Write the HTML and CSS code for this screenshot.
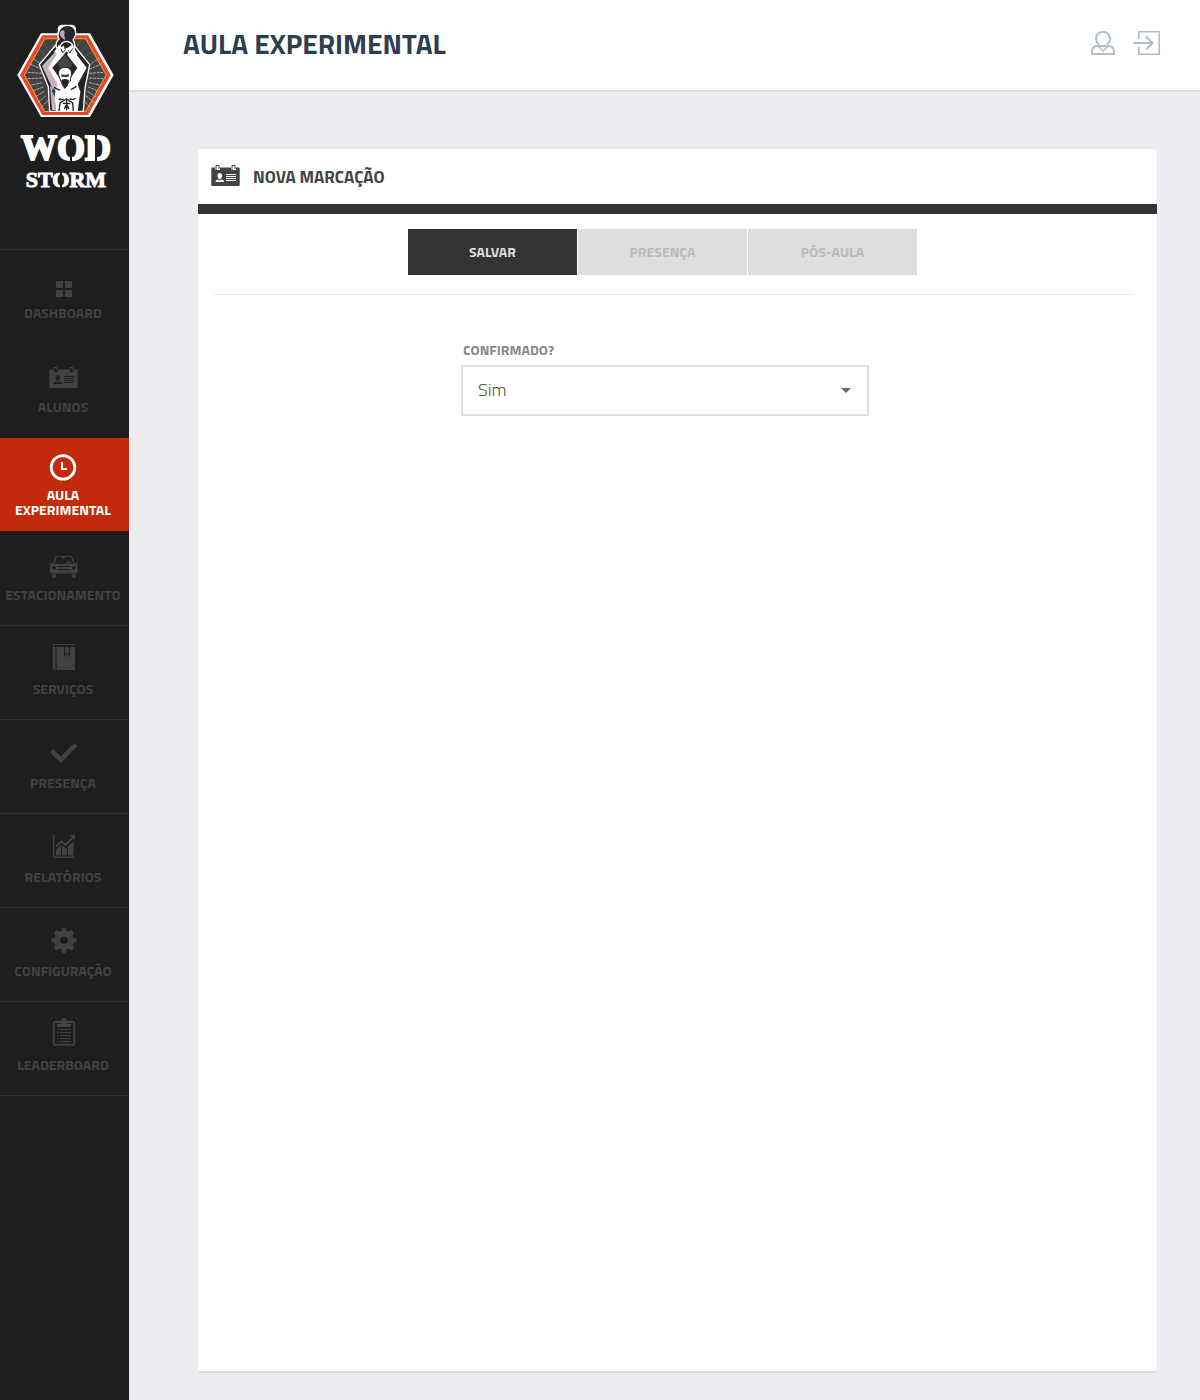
FILE: index.html
```html
<!DOCTYPE html>
<html lang="pt-BR">
<head>
<meta charset="utf-8">
<meta name="viewport" content="width=device-width, initial-scale=1">
<title>Aula Experimental - WOD Storm</title>
<link rel="stylesheet" href="styles.css">
</head>
<body>
<svg class="sprite" aria-hidden="true">
  <symbol id="id-card" viewBox="1 8 29 22">
    <path fill="currentColor" fill-rule="evenodd" d="M2.500 10.500H5V13h5v-2.500h11V13h5v-2.500h2.500a1.200 1.200 0 0 1 1.200 1.200v16.100a1.200 1.200 0 0 1-1.200 1.200h-26a1.200 1.200 0 0 1-1.200-1.200V11.700A1.200 1.200 0 0 1 2.500 10.500zM9.800 16c-1.500 0-2.300 1-2.300 2.500 0 1.500.8 2.800 1.300 3.200l1 .8 1-.8c.5-.4 1.300-1.700 1.300-3.200 0-1.500-.8-2.500-2.300-2.500zM8 22.500c-1.500.2-2.400.8-2.400 2.500H14c0-1.700-.9-2.300-2.400-2.500l-1.800 1zM16 17v1h10v-1zm0 2v1h10v-1zm0 2v1h10v-1zm0 2v1h10v-1z"/>
    <path fill="none" stroke="currentColor" d="M6 13v-4.500h3V12M22 13v-4.500h3V12"/>
  </symbol>
</svg>

<div class="app">
  <aside class="sidebar">
    <a class="brand" href="#" aria-label="WOD Storm">
      <svg class="emblem" viewBox="48 42 297 285" aria-hidden="true">
        <path fill="#fff" d="M123 70h50V58q0-14 14-14h27q14 0 14 14v12h42l71 125-71 126H123L52 195z"/>
        <path fill="#e8452a" d="M127 76h137l68 119-68 120H127L60 195z"/>
        <path fill="#f0a030" d="M133 85h125l62 110-62 111H133L72 195z"/>
        <path fill="#424242" d="M135 88h121l61 107-61 108H135L75 195z"/>
        <g stroke="#aaa" stroke-width="3" stroke-dasharray="9 2">
          <path d="M125 190 80 187M126 204l-44 2M127 218l-37 8M129 231l-30 12M133 244l-28 17M138 257l-26 21M146 269l-24 25M126 178l-38-17M128 166l-31-22M268 190l45-3M268 204l43 2M267 218l36 8M264 231l32 12M262 244l27 17M257 257l26 21M249 269l23 25M268 178l38-17M267 166l30-22"/>
        </g>
        <g stroke="#777" stroke-width="2" stroke-dasharray="5 3"><path d="M144 147 112 113M154 135l-25-40M168 120 151 90M226 120l18-32M237 134l30-37M249 147l35-30M185 150l7 32M208 150l-4 32"/></g>
        <path fill="#252525" stroke="#fff" stroke-width="4" d="M170 102 118 164l27 67 4 73h101l5-70 14-70-50-62-20-16z"/>
        <path fill="#444" d="m195 135 23 27-14 22h-12l-22-22z"/>
        <path fill="#c9b1c4" d="m168 123-42 45 29 62 5 65 27-72-34-51 33-39z"/>
        <path fill="#fff" d="m175 125-30 49 28 48-9 28 3 54h66l8-59-8-22 27-50-44-57-15 18 31 40-20 29h-34l-21-30 34-38z"/>
        <path fill="#222" stroke="#fff" stroke-width="4" d="M169 112q-3-16 8-25-6-9-1-22 8-18 27-18 21 0 24 19 0 14-8 23 9 15 2 30-8 10-22-1-14 14-30-6z"/>
        <ellipse cx="201" cy="72" rx="23" ry="23" fill="#28262a"/>
        <path fill="#bba6b8" d="M179 66q13-11 15 0-3 11 2 24-18-7-17-24z"/>
        <path fill="none" stroke="#fff" stroke-width="4" d="M180 111q4-16 19-17 17 1 21 17"/>
        <path fill="#fff" d="m162 126 15-22 8 7 7-4 2 11 14-8 6-5 8 9 11 19-18 10-15-19-15 17-12-9z"/>
        <path fill="none" stroke="#333" stroke-width="3" d="m183 116 5 12 8-9m8 1 6 9 8-14"/>
        <path fill="#fff" stroke="#222" stroke-width="3" d="M176 194q-3-20 18-22 21 0 21 20l-5 22-13 14-14-13z"/>
        <path fill="#23436f" d="m183 193 12 2 13-3-3 9h-20z"/>
        <path fill="#222" d="M184 211q10-8 23 0l-4 16-9 10-9-14z"/>
        <path fill="none" stroke="#222" stroke-width="4" d="m162 232 18 9M230 229l-17 10M176 267q10 3 15 0M209 267q12 3 18-2M177 303l3-24 19-12 19 12 2 24M200 267v34m-12-21 23 1m-18 16 7-14 7 14"/>
        <path fill="#c9b1c4" d="m150 226 13 17 4 58-11-1z"/>
        <path fill="#233a60" d="m159 234 7 8-2 19-8-17z"/>
      </svg>
      <svg class="wordmark" viewBox="0 0 96 66" aria-hidden="true">
        <g fill="#fff" stroke="#fff" text-anchor="middle">
          <text class="word-wod" x="48" y="34">WOD</text>
          <text class="word-storm" x="48" y="61">STORM</text>
        </g>
        <path stroke="#1e1e1e" stroke-width="2" d="M53 7v30M78 7v30M43 43v21"/>
      </svg>
    </a>
    <nav class="menu" aria-label="Menu principal">
      <a class="menu-item plain" href="#">
        <svg class="menu-icon" viewBox="0 0 30 34"><path fill="currentColor" d="M8 16h7v7H8zM17 16h7v7h-7zM8 25h7v7H8zM17 25h7v7h-7z"/></svg>
        <span class="menu-label">DASHBOARD</span>
      </a>
      <a class="menu-item plain" href="#">
        <svg class="menu-icon" viewBox="0 0 30 34"><use href="#id-card" x="1" y="8" width="29" height="22"/></svg>
        <span class="menu-label">ALUNOS</span>
      </a>
      <a class="menu-item active" href="#" aria-current="page">
        <svg class="menu-icon" viewBox="0 0 30 34"><g fill="none" stroke="currentColor"><circle cx="15" cy="14.400" r="11.800" stroke-width="2.800"/><path stroke-width="2" d="M14 9v7h5"/></g></svg>
        <span class="menu-label">AULA EXPERIMENTAL</span>
      </a>
      <a class="menu-item" href="#">
        <svg class="menu-icon" viewBox="0 0 30 34">
          <path fill="none" stroke="currentColor" stroke-width="1.300" d="M5.500 17.500 8.500 9.300h14.800l3.200 8.200M14 9.500l1.500 1.500 1.500-1.500M18.500 17a2.200 2.200 0 1 1 4.400 0"/>
          <path fill="currentColor" fill-rule="evenodd" d="M4 17h23.500q2.200 0 2.200 2.500V25q0 1.500-1.500 1.500H3.500Q2 26.500 2 25v-5.500Q2 17 4 17zm2.300 2.200a1.800 1.800 0 1 0 0 3.600 1.800 1.800 0 0 0 0-3.600zm19.400 0a1.800 1.800 0 1 0 0 3.600 1.800 1.800 0 0 0 0-3.600zM10 19v1h12v-1zm0 3v1h12v-1z"/>
          <path fill="currentColor" d="M1.500 16h3v1h-3zM27.500 16h3v1h-3zM4 27h4v3q-2 2.500-4 0zM23.700 27h4v3q-2 2.500-4 0z"/>
        </svg>
        <span class="menu-label">ESTACIONAMENTO</span>
      </a>
      <a class="menu-item" href="#">
        <svg class="menu-icon" viewBox="0 0 30 34">
          <path fill="currentColor" d="M6.500 3H26l1 1H7q-1 0-1 1t1 1h.500v23H6.500q-1.700 0-1.700-1.700V5q0-2 1.700-2zM8.500 6H16v10l3-3 3 3V6h5v22q0 1-1 1H8.500z"/>
          <path fill="currentColor" d="M17 6h4v7.500l-2-2-2 2z"/>
        </svg>
        <span class="menu-label">SERVIÇOS</span>
      </a>
      <a class="menu-item" href="#">
        <svg class="menu-icon" viewBox="0 0 30 34"><path fill="currentColor" d="m2.300 17.300 3-3.500 7.400 7.600L26.500 8l3 3-16.800 17.200z"/></svg>
        <span class="menu-label">PRESENÇA</span>
      </a>
      <a class="menu-item" href="#">
        <svg class="menu-icon" viewBox="0 0 30 34">
          <path fill="none" stroke="currentColor" stroke-width="1.400" d="M5.700 5.700v22.600H26"/>
          <path fill="none" stroke="currentColor" stroke-width="1.800" d="m8 17.500 5.500-5.300 4 3.800 7.500-7.500"/>
          <path fill="currentColor" d="M21.500 6H27v5.500zM8 21l5-5v10.500H8zM14 16l3.500 3.500 1.500-1v8h-5zM20 17.500l5.500-5v14H20z"/>
        </svg>
        <span class="menu-label">RELATÓRIOS</span>
      </a>
      <a class="menu-item" href="#">
        <svg class="menu-icon" viewBox="0 0 30 34">
          <g fill="none" stroke="currentColor"><circle cx="16" cy="17.300" r="6.700" stroke-width="6"/>
          <path stroke-width="5" stroke-linecap="round" d="M16 8V7M16 27.600v-1M6.700 17.300h-1M26.300 17.300h-1M9.400 10.700l-.7-.7M23.300 24.600l-.7-.7M22.600 10.700l.7-.7M8.700 24.600l.7-.7"/></g>
        </svg>
        <span class="menu-label">CONFIGURAÇÃO</span>
      </a>
      <a class="menu-item" href="#">
        <svg class="menu-icon" viewBox="0 0 30 34">
          <rect x="5.700" y="5" width="20.600" height="22.700" rx="1.500" fill="none" stroke="currentColor" stroke-width="2"/>
          <path fill="currentColor" fill-rule="evenodd" d="M9 7h3.500V4q.5 0 .7-1 .6-2 2.800-2t2.800 2q.2 1 .7 1v3H23v3H9zm7-3.600a1.200 1.200 0 1 0 0 2.400 1.200 1.200 0 0 0 0-2.400z"/>
          <path fill="none" stroke="currentColor" d="M9 12.500h1.500M12 12.500h11M9 15.500h1.500M12 15.500h11M9 18.500h1.500M12 18.500h11M9 21.500h1.500M12 21.500h11M9 24.500h1.500M12 24.500h11"/>
        </svg>
        <span class="menu-label">LEADERBOARD</span>
      </a>
    </nav>
  </aside>

  <div class="page">
    <header class="topbar">
      <h1 class="page-title">AULA EXPERIMENTAL</h1>
      <div class="actions">
        <a class="action" href="#" aria-label="Perfil">
          <svg width="24" height="24" viewBox="0 0 24 24" fill="none" stroke="currentColor" stroke-width="2"><path d="M8 13.500a7 7 0 1 1 8 0M6.500 15h11q5.500 0 5.500 6v2H1v-2q0-6 5.500-6z"/><path stroke-width="1.300" d="m7.500 15.500 4.500 5 4.500-5"/></svg>
        </a>
        <a class="action" href="#" aria-label="Sair">
          <svg width="27" height="24" viewBox="0 0 27 24" fill="none" stroke="currentColor" stroke-width="2"><path stroke-width="1.600" d="M5.800 8V.8h20.400v22.400H5.800V16"/><path d="M0 12h19M13 5.500l6.500 6.500-6.500 6.500"/></svg>
        </a>
      </div>
    </header>

    <main class="content">
      <section class="card">
        <header class="card-head">
          <svg class="card-icon" aria-hidden="true"><use href="#id-card"/></svg>
          <h2 class="card-title">NOVA MARCAÇÃO</h2>
        </header>
        <form class="card-body">
          <div class="steps">
            <button class="step current" type="button">SALVAR</button>
            <button class="step" type="button" disabled>PRESENÇA</button>
            <button class="step" type="button" disabled>PÓS-AULA</button>
          </div>
          <div class="fields">
            <div class="field">
              <label class="field-label" for="confirmado">CONFIRMADO?</label>
              <div class="select-box">
                <select class="select" id="confirmado">
                  <option>Sim</option>
                  <option>Não</option>
                </select>
                <svg class="caret" width="10" height="5" viewBox="0 0 10 5" aria-hidden="true"><path fill="#666" d="M0 0h10L5 5z"/></svg>
              </div>
            </div>
          </div>
        </form>
      </section>
    </main>
  </div>
</div>
</body>
</html>
```
FILE: styles.css
```css
*,
*::before,
*::after {
  box-sizing: border-box;
}

body {
  margin: 0;
  background: #ecedf1;
  font-family: "Titillium Web", Roboto, "Noto Sans", sans-serif;
  color: #434343;
}

h1,
h2 {
  margin: 0;
}

a {
  color: inherit;
  text-decoration: none;
}

.sprite {
  position: absolute;
  width: 0;
  height: 0;
}

.app {
  display: flex;
  min-height: 100vh;
}

/* Sidebar */

.sidebar {
  flex: 0 0 129px;
  background: #1e1e1e;
}

.brand {
  display: flex;
  flex-direction: column;
  align-items: center;
  gap: 7px;
  padding: 24px 0 57px 2px;
  border-bottom: 1px solid #2f2f2f;
}

.emblem {
  width: 99px;
  height: 95px;
}

.wordmark {
  width: 96px;
  height: 66px;
}

.word-wod,
.word-storm {
  font-family: "Liberation Serif", serif;
  font-weight: 700;
}

.word-wod {
  font-size: 36px;
  stroke-width: 2px;
}

.word-storm {
  font-size: 22px;
  stroke-width: 1px;
}

.menu-item {
  display: flex;
  flex-direction: column;
  align-items: center;
  gap: 6px;
  min-height: 94px;
  padding: 15px 3px 0 0;
  border-bottom: 1px solid #2f2f2f;
  color: #414141;
}

.menu-item.plain {
  border-bottom-color: transparent;
}

.menu-item.active {
  gap: 0;
  border-bottom-color: #1e1e1e;
  background: #c12a0b;
  color: #fff;
}

.menu-icon {
  flex: none;
  width: 30px;
  height: 34px;
}

.menu-label {
  font-size: 14px;
  font-weight: 700;
  line-height: 15px;
  text-align: center;
}

/* Top bar */

.page {
  display: flex;
  flex: 1;
  flex-direction: column;
  min-width: 0;
}

.topbar {
  display: flex;
  align-items: center;
  justify-content: space-between;
  min-height: 92px;
  padding: 0 40px 4px 54px;
  border-bottom: 2px solid #dcdde3;
  background: #fff;
}

.page-title {
  padding-top: 2px;
  font-size: 28px;
  font-weight: 700;
  line-height: 32px;
  color: #2c3e50;
}

.actions {
  display: flex;
  align-items: center;
  gap: 18px;
  color: #b0bec8;
}

.action svg {
  display: block;
}

/* Card */

.content {
  display: flex;
  flex: 1;
  padding: 57px 43px 27px 69px;
}

.card {
  flex: 1;
  border-bottom: 2px solid #d9dade;
  border-radius: 3px;
  background: #fff;
}

.card-head {
  display: flex;
  align-items: center;
  gap: 13px;
  height: 65px;
  padding: 0 13px 1px;
  border-bottom: 10px solid #333;
}

.card-icon {
  width: 29px;
  height: 22px;
}

.card-title {
  padding-top: 2px;
  font-size: 17px;
  font-weight: 700;
  line-height: 24px;
}

.card-body {
  padding: 15px 24px 24px 16px;
}

.steps {
  display: flex;
  justify-content: center;
  gap: 1px;
  padding: 0 22px 19px 0;
  border-bottom: 1px solid #ebebeb;
}

.step {
  width: 169px;
  height: 46px;
  padding: 0 0 2px;
  border: 0;
  background: #ddd;
  color: #bbb;
  font: inherit;
  font-size: 14px;
  font-weight: 700;
}

.step.current {
  background: #333;
  color: #ddd;
}

.fields {
  display: flex;
  justify-content: center;
  padding: 47px 17px 0 0;
}

.field {
  width: 408px;
}

.field-label {
  display: block;
  padding: 0 2px 7px;
  color: #888;
  font-size: 14px;
  font-weight: 700;
  line-height: 16px;
}

.select-box {
  position: relative;
}

.select {
  display: block;
  width: 100%;
  height: 51px;
  padding: 0 15px 2px;
  border: 2px solid #dde1e0;
  border-radius: 0;
  appearance: none;
  background: #fff;
  color: #555;
  font: inherit;
  font-size: 18px;
  font-weight: 300;
}

.caret {
  position: absolute;
  top: 23px;
  right: 18px;
  pointer-events: none;
}
```
